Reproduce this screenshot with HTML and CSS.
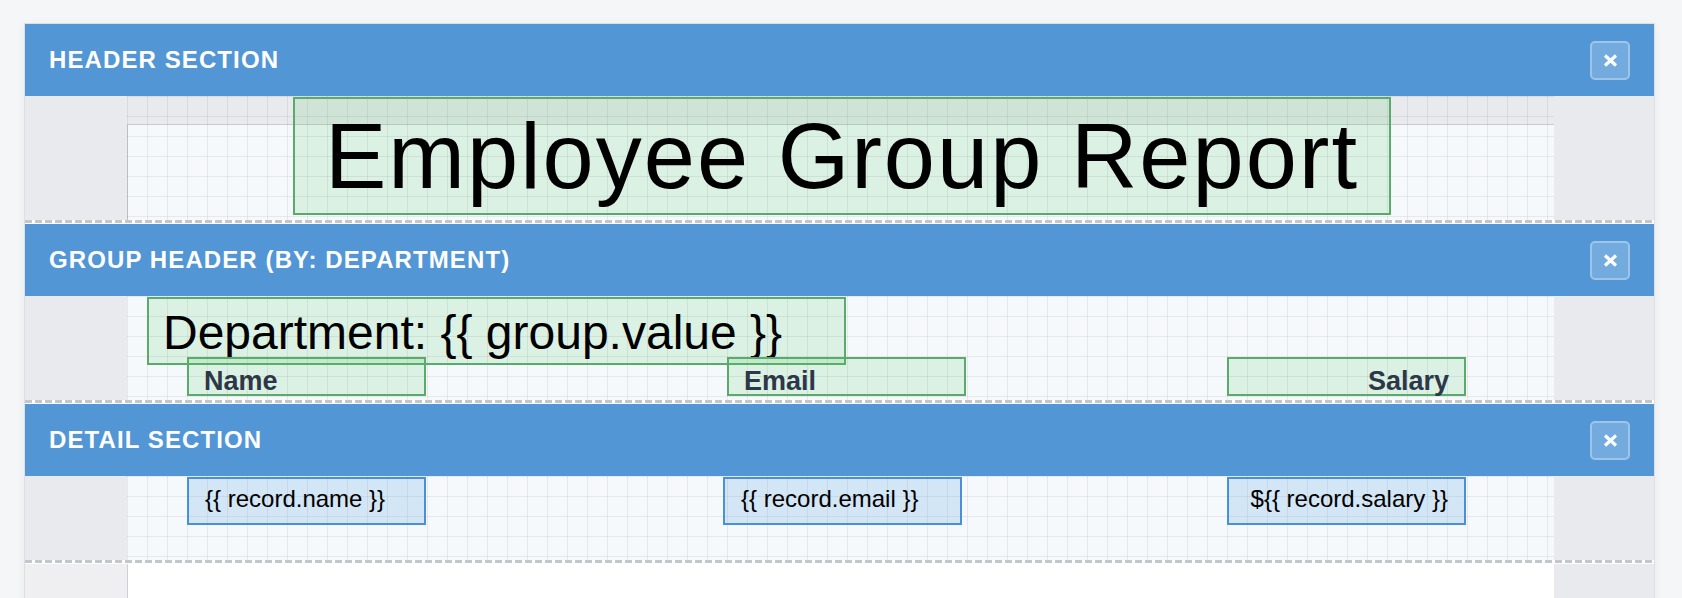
FILE: index.html
```html
<!DOCTYPE html>
<html lang="en">
<head>
<meta charset="utf-8">
<title>Report Designer</title>
<link rel="stylesheet" href="styles.css">
</head>
<body>
<div class="designer">

  <section class="band">
    <div class="band-bar">
      <span class="band-title">Header Section</span>
      <button class="band-close" type="button" aria-label="Remove section">
        <svg width="15" height="13" viewBox="0 0 15 13"><path d="M2 1.5L13 11.5M13 1.5L2 11.5" stroke="#fff" stroke-width="3.2" fill="none"/></svg>
      </button>
    </div>
    <div class="band-body band-body--header">
      <div class="gutter gutter-left"></div>
      <div class="canvas canvas--first">
        <div class="el el-label el-title" style="left:166px;top:1px;width:1098px;height:118px">Employee Group Report</div>
      </div>
      <div class="gutter gutter-right"></div>
    </div>
  </section>

  <section class="band">
    <div class="band-bar">
      <span class="band-title">Group Header (By: department)</span>
      <button class="band-close" type="button" aria-label="Remove section">
        <svg width="15" height="13" viewBox="0 0 15 13"><path d="M2 1.5L13 11.5M13 1.5L2 11.5" stroke="#fff" stroke-width="3.2" fill="none"/></svg>
      </button>
    </div>
    <div class="band-body band-body--group">
      <div class="gutter gutter-left"></div>
      <div class="canvas">
        <div class="el el-label el-group" style="left:20px;top:1px;width:699px;height:68px">Department: {{ group.value }}</div>
        <div class="el el-label el-colhead" style="left:60px;top:61px;width:239px;height:39px">Name</div>
        <div class="el el-label el-colhead" style="left:600px;top:61px;width:239px;height:39px">Email</div>
        <div class="el el-label el-colhead el-right" style="left:1100px;top:61px;width:239px;height:39px">Salary</div>
      </div>
      <div class="gutter gutter-right"></div>
    </div>
  </section>

  <section class="band">
    <div class="band-bar">
      <span class="band-title">Detail Section</span>
      <button class="band-close" type="button" aria-label="Remove section">
        <svg width="15" height="13" viewBox="0 0 15 13"><path d="M2 1.5L13 11.5M13 1.5L2 11.5" stroke="#fff" stroke-width="3.2" fill="none"/></svg>
      </button>
    </div>
    <div class="band-body band-body--detail">
      <div class="gutter gutter-left"></div>
      <div class="canvas">
        <div class="el el-field" style="left:60px;top:1px;width:239px;height:48px">{{ record.name }}</div>
        <div class="el el-field" style="left:596px;top:1px;width:239px;height:48px">{{ record.email }}</div>
        <div class="el el-field el-right" style="left:1100px;top:1px;width:239px;height:48px">${{ record.salary }}</div>
      </div>
      <div class="gutter gutter-right"></div>
    </div>
  </section>

  <div class="sheet-tail">
    <div class="tail-left"></div>
    <div class="tail-page"></div>
    <div class="gutter gutter-right"></div>
  </div>

</div>
</body>
</html>
```

FILE: styles.css
```css
* {
  box-sizing: border-box;
}

html,
body {
  margin: 0;
}

body {
  height: 598px;
  overflow: hidden;
  background: #f5f6f8;
  font-family: "Liberation Sans", Arial, Helvetica, sans-serif;
}

/* designer frame */
.designer {
  margin: 23px 27px 0 24px;
  border: 1px solid #dcdfe3;
  background: #fff;
  box-shadow: 0 2px 8px rgba(0, 0, 0, 0.06);
}

/* one report band: title bar, body, dashed separator */
.band {
  padding-bottom: 4px;
  background:
    repeating-linear-gradient(90deg, #c3c6ca 0 7px, #ffffff 7px 10px) 0 calc(100% - 1px) / 100% 3px no-repeat,
    #fff;
}

.band-bar {
  height: 72px;
  display: flex;
  align-items: center;
  justify-content: space-between;
  padding: 0 24px;
  background: #5296d6;
}

.band-title {
  color: #fff;
  font-size: 24px;
  font-weight: 700;
  letter-spacing: 1.1px;
  text-transform: uppercase;
}

.band-close {
  width: 40px;
  height: 39px;
  padding: 0;
  display: flex;
  align-items: center;
  justify-content: center;
  border: 2px solid rgba(255, 255, 255, 0.3);
  border-radius: 5px;
  background: rgba(255, 255, 255, 0.2);
  cursor: pointer;
}

.band-body {
  display: flex;
}

.band-body--header {
  height: 124px;
}

.band-body--group {
  height: 104px;
}

.band-body--detail {
  height: 84px;
}

.gutter {
  background: #e8eaee;
}

.gutter-left {
  width: 102px;
  flex: none;
}

.gutter-right {
  flex: 1;
}

.canvas {
  position: relative;
  width: 1427px;
  flex: none;
  background:
    linear-gradient(90deg, rgba(0, 0, 0, 0.065) 1px, transparent 1px) 0 0 / 20px 20px,
    linear-gradient(rgba(0, 0, 0, 0.065) 1px, transparent 1px) 0 0 / 20px 20px,
    #f6f9fc;
}

/* first band shows the top margin above the sheet */
.canvas--first {
  background:
    linear-gradient(90deg, rgba(0, 0, 0, 0.065) 1px, transparent 1px) 0 0 / 20px 20px,
    linear-gradient(rgba(0, 0, 0, 0.065) 1px, transparent 1px) 0 0 / 20px 20px,
    linear-gradient(90deg, #cbcdd0 1px, transparent 1px) 0 29px / 100% 100% no-repeat,
    linear-gradient(#e8eaee 0 28px, #c9cbce 28px 29px, #f6f9fc 29px);
}

/* report elements placed on the canvas */
.el {
  position: absolute;
  padding: 6px 16px;
  border: 2px solid;
  white-space: nowrap;
  color: #000;
  line-height: normal;
}

.el-label {
  border-color: #5aab6b;
  background: rgba(65, 195, 84, 0.15);
}

.el-field {
  border-color: #4a90d9;
  background: rgba(75, 153, 221, 0.2);
  font-size: 24px;
}

.el-title {
  display: flex;
  align-items: center;
  justify-content: center;
  font-size: 92px;
  letter-spacing: 2px;
}

.el-group {
  padding-left: 14px;
  font-size: 48px;
}

.el-colhead {
  padding: 7px 15px 0;
  color: #2d3748;
  font-size: 27px;
  font-weight: 700;
}

.el-right {
  text-align: right;
}

/* empty sheet area below the last band */
.sheet-tail {
  display: flex;
  height: 60px;
}

.tail-left {
  width: 102px;
  flex: none;
  background: #efeff1;
}

.tail-page {
  width: 1427px;
  flex: none;
  border-left: 1px solid #cfd2d5;
  background: #fff;
}
```
